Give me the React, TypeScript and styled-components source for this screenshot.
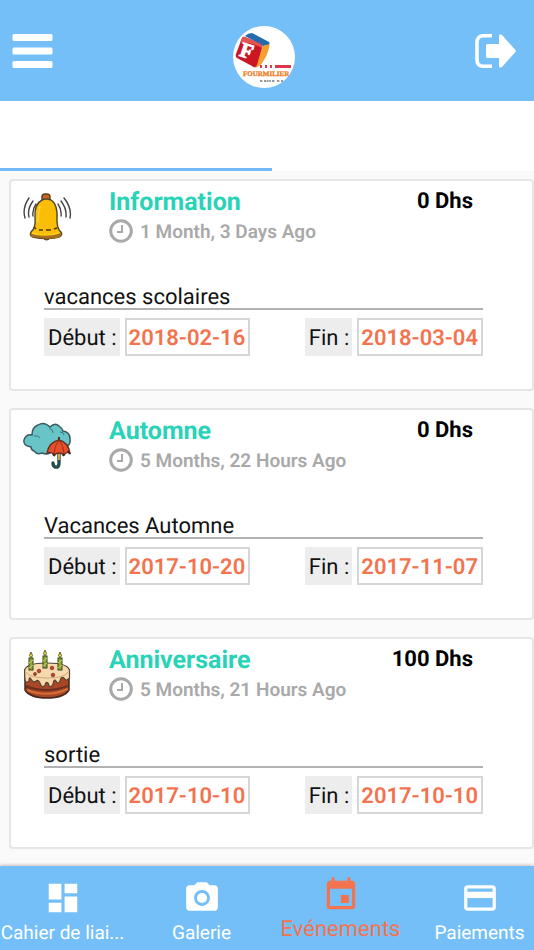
import React from "react";
import styled, { createGlobalStyle } from "styled-components";
import { MdDashboard, MdPhotoCamera, MdEvent, MdPayment } from "react-icons/md";

const GlobalStyle = createGlobalStyle`
  * { box-sizing: border-box; }
  body {
    margin: 0;
    background: #fafafa;
    color: #111;
    font-family: Roboto, "Noto Sans", sans-serif;
    text-rendering: geometricPrecision;
    overflow-x: hidden;
  }
  button { font: inherit; border: 0; padding: 0; background: none; cursor: pointer; text-rendering: inherit; }
`;

const Screen = styled.div`
  display: flex;
  flex-direction: column;
  min-height: 100vh;
  overflow: hidden;
`;

const TopBar = styled.header`
  display: flex;
  align-items: center;
  justify-content: space-between;
  height: 101px;
  padding: 10px 17px 10px 12px;
  background: #75bff9;
`;

const IconButton = styled.button`
  display: block;
  color: #fff;
  line-height: 0;
`;

const Logo = styled.svg`
  display: block;
  width: 62px;
  height: 62px;
  margin-top: 12px;
`;

const TabStrip = styled.div`
  display: flex;
  height: 70px;
  background: #fff;
`;

const Tab = styled.button<{ $active?: boolean }>`
  flex: ${(p) => (p.$active ? "0 0 51%" : "1")};
  && { border-bottom: 3px solid ${(p) => (p.$active ? "#75b9f6" : "transparent")}; }
`;

const EventList = styled.main`
  flex: 1;
  display: flex;
  flex-direction: column;
  gap: 17px;
  padding: 8px 0 16px 9px;
`;

const Card = styled.article`
  padding: 6px 49px 33px 33px;
  background: #fff;
  border: 2px solid #e6e6e6;
  border-radius: 4px;
`;

const CardHead = styled.div`
  display: flex;
  align-items: flex-start;
  height: 60px;
  margin: 0 10px 0 -22px;
`;

const Picture = styled.svg`
  flex: none;
  width: 50px;
  height: 50px;
  margin: 5px 37px 0 0;
`;

const Heading = styled.div`
  flex: 1;
`;

const Title = styled.h2`
  margin: 0;
  padding-top: 2px;
  font-size: 25px;
  line-height: 28px;
  font-weight: 700;
  color: #29d3b7;
`;

const Age = styled.div`
  display: flex;
  align-items: center;
  gap: 7px;
  height: 28px;
  font-size: 19px;
  font-weight: 600;
  color: #a9a9a9;
`;

const Price = styled.div`
  font-size: 22px;
  line-height: 30px;
  font-weight: 700;
  color: #000;
`;

const Description = styled.p`
  margin: 36px 0 8px;
  height: 27px;
  border-bottom: 2px solid #b2b2b2;
  font-size: 22px;
  line-height: 30px;
`;

const Dates = styled.div`
  display: flex;
  justify-content: space-between;
`;

const DateField = styled.div`
  display: flex;
  gap: 5px;
  height: 38px;
  font-size: 22px;
  line-height: 42px;
`;

const DateLabel = styled.span`
  padding: 0 3px 0 4px;
  background: #ededed;
`;

const DateValue = styled.time`
  padding: 0 3px 0 2px;
  border: 2px solid #d6d6d6;
  line-height: 38px;
  font-weight: 600;
  color: #f4734f;
`;

const BottomNav = styled.nav`
  height: 84px;
  background: #75bff9;
  box-shadow: 0 -1px 3px rgba(90, 50, 50, 0.3);
`;

const NavTrack = styled.div`
  display: grid;
  grid-template-columns: repeat(4, 1fr);
  margin: 0 -15px 0 -7px;
`;

const NavItem = styled.button<{ $active?: boolean }>`
  && {
    display: flex;
    flex-direction: column;
    align-items: center;
    justify-content: flex-start;
    gap: 4px;
    padding-top: ${(p) => (p.$active ? "10px" : "13px")};
    color: ${(p) => (p.$active ? "#f4734f" : "#fff")};
    font-size: ${(p) => (p.$active ? "22px" : "19px")};
    line-height: 24px;
    white-space: nowrap;
  }
`;

const MenuIcon = () => (
  <svg width="41" height="36" viewBox="0 0 41 36" fill="currentColor">
    <rect x="0.5" y="1" width="40" height="7" rx="1.5" />
    <rect x="0.5" y="14.5" width="40" height="7" rx="1.5" />
    <rect x="0.5" y="28" width="40" height="7" rx="1.5" />
  </svg>
);

const LogoutIcon = () => (
  <svg width="42" height="36" viewBox="0 0 42 36">
    <path d="M17 2.8H8.5Q2 2.8 2 9.3V26.7Q2 33.2 8.5 33.2H17" fill="none" stroke="currentColor" strokeWidth="3.6" strokeLinecap="butt" />
    <path d="M11 12.5Q11 11 12.5 11H24V3.5Q24 0 27 2L40 16.5Q41.5 18 40 19.5L27 34Q24 36 24 32.5V25H12.5Q11 25 11 23.5Z" fill="currentColor" />
  </svg>
);

const BrandLogo = () => (
  <Logo viewBox="0 0 62 62" role="img" aria-label="Fourmilier">
    <circle cx="31" cy="31" r="31" fill="#fff" />
    <path d="M12 10Q15 7 19 7L36 16Q37 17 36 19L30 20Z" fill="#246bad" />
    <path d="M30 20L36.500 18Q36 26 31 34Q28 40 22 42Z" fill="#f3a02f" />
    <path d="M9 12Q10 10 12 11L28 18Q30 19 29 22L24 39Q22 43 19 40L4 32Q2 31 3 28Z" fill="#cb1724" />
    <path d="M9 12Q10 10 12 11L28 18Q30 19 29 22Q18 16 7 17Z" fill="#e35455" />
    <text x="7" y="32" transform="rotate(18 14 26)" fontFamily="Liberation Serif, serif" fontSize="21" fontWeight="700" fill="#fff" stroke="#fff" strokeWidth="1">F</text>
    <g fill="#dc3751">
      <rect x="27" y="39" width="2" height="3" />
      <rect x="32" y="39" width="2" height="3" />
      <rect x="37" y="39" width="2" height="3" />
      <rect x="42" y="39" width="16" height="3" />
    </g>
    <text x="10" y="50" fontFamily="Liberation Serif, serif" fontSize="7" fontWeight="700" fill="#ec7c22" stroke="#ec7c22" strokeWidth="0.3">FOURMILIER</text>
    <path d="M27 55H30M31 55H38M39 55H42M44 55H47M48 55H50" stroke="#777" strokeWidth="1.6" strokeDasharray="2 0.6" />
  </Logo>
);

const ClockIcon = () => (
  <svg width="24" height="24" viewBox="0 0 24 24" fill="none" stroke="currentColor">
    <circle cx="12" cy="12" r="10.3" strokeWidth="3" />
    <path d="M13 6V13H8" strokeWidth="2" />
  </svg>
);

const BellPicture = () => (
  <Picture viewBox="0 0 50 50" role="img" aria-label="Cloche">
    <g fill="none" stroke="#444" strokeWidth="1.4" strokeLinecap="round">
      <path d="M7 6Q0 16 3 26M11 9Q5 17 7 25M14 12Q10 18 11 24" />
      <path d="M42 6Q50 16 48 26M39 9Q45 17 44 25M36 12Q40 18 39 24" />
    </g>
    <path d="M20 43Q21 48 25 48Q28 48 29 43Z" fill="#ad7126" stroke="#4d3515" />
    <rect x="20" y="2" width="8" height="8" rx="3" fill="#cc6425" stroke="#5a4015" strokeWidth="1.4" />
    <path d="M20 8Q24 6 29 8Q36 12 35 28Q35 37 39 40Q41 43 37 45Q24 48 11 45Q7 44 9 40Q14 36 13 26Q12 12 20 8Z" fill="#fabd08" stroke="#4e4824" strokeWidth="1.4" />
    <path d="M9 41Q20 46 39 41Q39 45 36 46Q24 48 11 45Q7 44 9 41Z" fill="#a76e20" />
    <path d="M10 40Q22 45 38 40L36 42Q24 45 10 42Z" fill="#ffd318" />
    <path d="M12 35L14 37M17 38L21 38M24 38L29 38M32 37L35 36" stroke="#493917" strokeWidth="1.6" />
    <path d="M18 14Q16 22 16 30" fill="none" stroke="#ffd22c" strokeWidth="2" />
  </Picture>
);

const AutumnPicture = () => (
  <Picture viewBox="0 0 50 50" role="img" aria-label="Nuage et parapluie">
    <path d="M9 26Q1 25 2 19Q4 13 10 14Q10 6 16 4Q22 0 28 6Q33 1 37 5Q40 7 41 10Q48 11 48 18Q49 24 43 27Q37 29 32 28Q27 35 20 32Q15 34 12 30Q9 29 9 26Z" fill="#67c5c7" stroke="#3b5960" strokeWidth="1.5" />
    <path d="M12 15Q17 14 18 17M27 7Q31 8 31 12M38 11Q42 11 42 14" fill="none" stroke="#3b7780" />
    <path d="M37 31V42Q37 47 33 46Q31 45 31 42" fill="none" stroke="#244e4c" strokeWidth="3.4" strokeLinecap="round" />
    <path d="M37 31V39" stroke="#cba34b" strokeWidth="2" />
    <path d="M37 16V20" stroke="#4c3727" strokeWidth="2" />
    <path d="M25 32Q27 21 37 19Q46 21 48 32Q45 30 42 34Q37 30 32 34Q29 30 25 32Z" fill="#e84e2b" stroke="#682c1e" strokeWidth="1.3" />
    <path d="M37 19Q32 25 32 33M37 19Q42 25 42 33" fill="none" stroke="#91331f" />
    <path d="M31 33L33 35M42 33L41 35M46 30L48 33" stroke="#40251e" strokeWidth="2" />
  </Picture>
);

const CakePicture = () => (
  <Picture viewBox="0 0 50 50" role="img" aria-label="Gâteau d'anniversaire">
    <path d="M3 20V40Q8 48 25 48Q42 48 47 40V20Z" fill="#a84626" stroke="#43281b" strokeWidth="1.5" />
    <path d="M4 35Q24 43 46 35V37Q25 45 4 38Z" fill="#6b3021" />
    <path d="M5 40Q25 48 46 39" fill="none" stroke="#d36e36" strokeWidth="2" />
    <path d="M2.500 21Q3 13 25 13Q47 13 47.500 21V28Q44 32 42 28Q39 26 38 31Q36 35 34 31Q32 28 31 34Q28 40 26 33Q24 31 23 35Q20 39 18 33Q16 29 14 31Q11 33 9 29Q7 26 7 31Q4 34 3 30Z" fill="#f7d9ae" stroke="#564430" strokeWidth="1.2" />
    <path d="M4 22Q7 28 25 28Q43 28 46 22" fill="none" stroke="#d0a67b" />
    {[7, 21, 36].map((x, i) => (
      <g key={x} transform={`translate(${x} ${i === 1 ? 0 : 2})`}>
        <rect x="0" y="6" width="4" height="12" fill="#8ea634" stroke="#354b20" />
        <path d="M0 11L4 8M0 16L4 13" stroke="#d2d65b" />
        <path d="M2 6Q-1 4 2 0Q5 4 2 6Z" fill="#e5d741" stroke="#434620" strokeWidth="0.8" />
      </g>
    ))}
    <g fill="#c73d2b" stroke="#713020" strokeWidth="0.7">
      <circle cx="17" cy="21" r="1.8" />
      <circle cx="30" cy="18" r="1.8" />
      <circle cx="13" cy="24" r="1.5" />
      <circle cx="31" cy="25" r="1.8" />
    </g>
  </Picture>
);

const events = [
  { title: "Information", age: "1 Month, 3 Days Ago", price: "0 Dhs", text: "vacances scolaires", start: "2018-02-16", end: "2018-03-04", Art: BellPicture },
  { title: "Automne", age: "5 Months, 22 Hours Ago", price: "0 Dhs", text: "Vacances Automne", start: "2017-10-20", end: "2017-11-07", Art: AutumnPicture },
  { title: "Anniversaire", age: "5 Months, 21 Hours Ago", price: "100 Dhs", text: "sortie", start: "2017-10-10", end: "2017-10-10", Art: CakePicture },
];

const sections = [
  { label: "Cahier de liai...", Icon: MdDashboard },
  { label: "Galerie", Icon: MdPhotoCamera },
  { label: "Evénements", Icon: MdEvent, active: true },
  { label: "Paiements", Icon: MdPayment },
];

export default function App() {
  return (
    <Screen>
      <GlobalStyle />
      <TopBar>
        <IconButton aria-label="Menu"><MenuIcon /></IconButton>
        <BrandLogo />
        <IconButton aria-label="Déconnexion"><LogoutIcon /></IconButton>
      </TopBar>
      <TabStrip>
        <Tab $active aria-label="Premier onglet" />
        <Tab aria-label="Second onglet" />
      </TabStrip>
      <EventList>
        {events.map(({ title, age, price, text, start, end, Art }) => (
          <Card key={title}>
            <CardHead>
              <Art />
              <Heading>
                <Title>{title}</Title>
                <Age><ClockIcon />{age}</Age>
              </Heading>
              <Price>{price}</Price>
            </CardHead>
            <Description>{text}</Description>
            <Dates>
              <DateField>
                <DateLabel>Début :</DateLabel>
                <DateValue dateTime={start}>{start}</DateValue>
              </DateField>
              <DateField>
                <DateLabel>Fin :</DateLabel>
                <DateValue dateTime={end}>{end}</DateValue>
              </DateField>
            </Dates>
          </Card>
        ))}
      </EventList>
      <BottomNav>
        <NavTrack>
          {sections.map(({ label, Icon, active }) => (
            <NavItem key={label} $active={active} aria-current={active ? "page" : undefined}>
              <Icon size={38} />
              {label}
            </NavItem>
          ))}
        </NavTrack>
      </BottomNav>
    </Screen>
  );
}
